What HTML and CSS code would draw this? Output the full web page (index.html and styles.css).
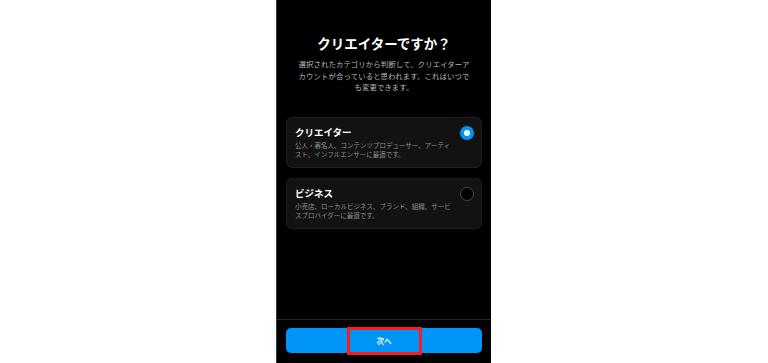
FILE: index.html
```html
<!DOCTYPE html>
<html lang="ja">
<head>
<meta charset="utf-8">
<link rel="stylesheet" href="styles.css">
</head>
<body>
<div class="page">
  <div class="phone">
    <div class="main">
      <h1 class="title">クリエイターですか？</h1>
      <p class="lead">選択されたカテゴリから判断して、クリエイターア<br>カウントが合っていると思われます。これはいつで<br>も変更できます。</p>
      <div class="options">
        <div class="card">
          <div class="card-text">
            <div class="card-title">クリエイター</div>
            <div class="card-desc">公人・著名人、コンテンツプロデューサー、アーティ<br>スト、インフルエンサーに最適です。</div>
          </div>
          <span class="radio radio-on"></span>
        </div>
        <div class="card">
          <div class="card-text">
            <div class="card-title">ビジネス</div>
            <div class="card-desc">小売店、ローカルビジネス、ブランド、組織、サービ<br>スプロバイダーに最適です。</div>
          </div>
          <span class="radio"></span>
        </div>
      </div>
    </div>
    <div class="footer">
      <button class="next"><span class="next-label">次へ</span></button>
    </div>
  </div>
</div>
</body>
</html>
```
FILE: styles.css
```css
html, body {
  margin: 0;
  padding: 0;
  background: #ffffff;
}
body {
  font-family: "Noto Sans CJK JP", "Noto Sans", sans-serif;
}
.page {
  width: 768px;
  height: 363px;
  padding-left: 276px;
  box-sizing: border-box;
  overflow: hidden;
}
.phone {
  width: 215px;
  height: 363px;
  background: #000000;
  border-left: 1px solid #3a3a3a;
  box-sizing: border-box;
  display: flex;
  flex-direction: column;
}
.main {
  flex: 1;
  display: flex;
  flex-direction: column;
  padding: 34px 9px 0 9px;
}
.title {
  margin: 0;
  color: #ffffff;
  font-size: 13.5px;
  font-weight: 700;
  line-height: 18px;
  text-align: center;
  letter-spacing: 0;
}
.lead {
  margin: 6px 0 0 0;
  color: #b8b8b8;
  font-size: 7.4px;
  line-height: 11.5px;
  text-align: center;
  letter-spacing: 0.1px;
}
.options {
  margin-top: 24px;
  display: flex;
  flex-direction: column;
  gap: 10px;
}
.card {
  height: 51px;
  box-sizing: border-box;
  background: #121212;
  border: 1px solid #1f1f1f;
  border-radius: 6px;
  display: flex;
  justify-content: space-between;
  align-items: flex-start;
  padding: 8px 7px 0 8px;
}
.card-title {
  color: #ffffff;
  font-size: 9.5px;
  font-weight: 700;
  line-height: 12px;
}
.card-desc {
  margin-top: 3px;
  color: #8e8e8e;
  font-size: 6.5px;
  line-height: 9px;
}
.radio {
  width: 14px;
  height: 14px;
  box-sizing: border-box;
  border-radius: 50%;
  border: 1px solid #4a4a4a;
  background: #000000;
  flex: none;
}
.radio-on {
  border: 4.5px solid #0095f6;
  background: #ffffff;
}
.footer {
  border-top: 1px solid #262626;
  padding: 8px 9px 10px 9px;
}
.next {
  display: flex;
  align-items: center;
  justify-content: center;
  width: 100%;
  height: 25px;
  border: none;
  border-radius: 5px;
  background: #0095f6;
  padding: 0;
  position: relative;
}
.next-label {
  color: #e8f4ff;
  font-family: "Noto Sans CJK JP", sans-serif;
  font-size: 7.5px;
  font-weight: 700;
}
.next::after {
  content: "";
  position: absolute;
  left: 61px;
  top: -1px;
  width: 75px;
  height: 28px;
  box-sizing: border-box;
  border: 3px solid #ff1a1a;
}
```
